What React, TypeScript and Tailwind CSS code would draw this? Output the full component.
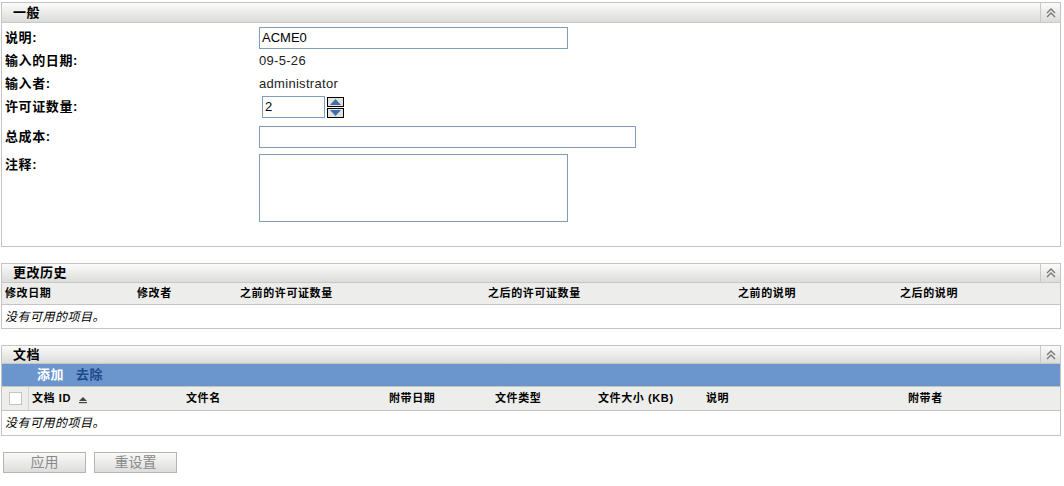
import React from "react";

const CJK = { fontFamily: '"Liberation Sans", "Noto Sans CJK SC", sans-serif' };

function Collapse() {
  return (
    <div className="w-[20px] h-full border-l border-[#c8c8c8] flex items-center justify-center">
      <svg width="10" height="10" viewBox="0 0 10 10">
        <path d="M1 5 L5 1 L9 5" fill="none" stroke="#777" strokeWidth="1.4" />
        <path d="M1 9 L5 5 L9 9" fill="none" stroke="#777" strokeWidth="1.4" />
      </svg>
    </div>
  );
}

function Header({ title, h = "h-[20px]" }: { title: string; h?: string }) {
  return (
    <div className={`${h} flex items-stretch bg-gradient-to-b from-[#fbfbfb] to-[#dcdcd9] border-b border-[#c8c8c8]`}>
      <div className="flex-1 flex items-center pl-[11px] text-[13px] tracking-[0.5px] font-bold text-black">{title}</div>
      <Collapse />
    </div>
  );
}

function Spin() {
  return (
    <div className="flex flex-col gap-[1px] ml-[2px]">
      <div className="w-[17px] h-[10px] border border-black bg-[#e4e2dc] flex items-center justify-center">
        <svg width="11" height="6" viewBox="0 0 11 6"><path d="M0 6 L5.5 0 L11 6 Z" fill="#3a6fb0" /></svg>
      </div>
      <div className="w-[17px] h-[10px] border border-black bg-[#e4e2dc] flex items-center justify-center">
        <svg width="11" height="6" viewBox="0 0 11 6"><path d="M0 0 L5.5 6 L11 0 Z" fill="#3a6fb0" /></svg>
      </div>
    </div>
  );
}

export default function App() {
  const lbl = "w-[254px] shrink-0 text-[13px] tracking-[0.6px] font-bold text-black";
  const val = "text-[13px] tracking-[0.3px] text-[#222]";
  const inputCls = "h-[22px] border border-[#7f9db9] bg-white text-[13px] text-black px-[2px] flex items-center";
  const colHdr = "text-[11px] tracking-[0.6px] font-bold text-black";
  const empty = "text-[12px] tracking-[0.5px] italic text-black";
  return (
    <div className="bg-white w-[1064px] h-[486px] pt-[2px] pl-[1px]" style={CJK}>
      {/* General */}
      <div className="w-[1060px] h-[245px] border border-[#c4c4c4]">
        <Header title="一般" />
        <div className="pl-[3px] pt-[3px]">
          <div className="flex items-center h-[24px]">
            <div className={lbl}>说明:</div>
            <div className={`${inputCls} w-[309px]`}>ACME0</div>
          </div>
          <div className="flex items-center h-[22px]">
            <div className={lbl}>输入的日期:</div>
            <div className={val}>09-5-26</div>
          </div>
          <div className="flex items-center h-[24px]">
            <div className={lbl}>输入者:</div>
            <div className={val}>administrator</div>
          </div>
          <div className="flex items-center h-[22px]">
            <div className={lbl}>许可证数量:</div>
            <div className={`${inputCls} w-[63px] ml-[3px]`}>2</div>
            <Spin />
          </div>
          <div className="flex items-center h-[24px] mt-[7px]">
            <div className={lbl}>总成本:</div>
            <div className={`${inputCls} w-[377px]`}></div>
          </div>
          <div className="flex items-start mt-[5px]">
            <div className={`${lbl} pt-[1px]`}>注释:</div>
            <div className="w-[309px] h-[68px] border border-[#7f9db9] bg-white"></div>
          </div>
        </div>
      </div>

      {/* History */}
      <div className="w-[1060px] mt-[16px] border border-[#c4c4c4]">
        <Header title="更改历史" h="h-[19px]" />
        <div className={`h-[22px] bg-[#ededeb] border-b border-[#c4c4c4] flex items-center pl-[3px] ${colHdr}`}>
          <div className="w-[132px]">修改日期</div>
          <div className="w-[103px]">修改者</div>
          <div className="w-[248px]">之前的许可证数量</div>
          <div className="w-[250px]">之后的许可证数量</div>
          <div className="w-[162px]">之前的说明</div>
          <div>之后的说明</div>
        </div>
        <div className={`h-[23px] flex items-center pl-[3px] ${empty}`}>没有可用的项目。</div>
      </div>

      {/* Documents */}
      <div className="w-[1060px] mt-[16px] border border-[#c4c4c4]">
        <Header title="文档" h="h-[18px]" />
        <div className="h-[22px] bg-[#6a95cd] flex items-center pl-[35px] gap-[12px] text-[13px] tracking-[0.5px] font-bold">
          <span className="text-white">添加</span>
          <span className="text-[#1d4a8a]">去除</span>
        </div>
        <div className={`h-[25px] bg-[#ededeb] border-y border-[#c4c4c4] flex items-stretch ${colHdr}`}>
          <div className="w-[27px] border-r border-[#d4d4d4] flex items-center justify-center">
            <div className="w-[13px] h-[13px] border border-[#c4c4bc] bg-white" />
          </div>
          <div className="w-[157px] pl-[3px] flex items-center">
            文档 ID
            <svg width="8" height="8" viewBox="0 0 8 8" className="ml-[8px] mt-[2px]">
              <path d="M0 5 L4 1 L8 5 Z" fill="#444" />
              <rect x="0" y="6" width="8" height="1.2" fill="#444" />
            </svg>
          </div>
          <div className="w-[203px] flex items-center">文件名</div>
          <div className="w-[106px] flex items-center">附带日期</div>
          <div className="w-[103px] flex items-center">文件类型</div>
          <div className="w-[108px] flex items-center">文件大小 (KB)</div>
          <div className="w-[202px] flex items-center">说明</div>
          <div className="flex items-center">附带者</div>
        </div>
        <div className={`h-[24px] flex items-center pl-[3px] ${empty}`}>没有可用的项目。</div>
      </div>

      <div className="flex gap-[8px] mt-[16px] ml-[2px]">
        <div className="w-[83px] h-[21px] border border-[#b4b4b0] bg-gradient-to-b from-[#fafaf8] to-[#dddddb] flex items-center justify-center text-[14px] text-[#8a8a8a]">应用</div>
        <div className="w-[83px] h-[21px] border border-[#b4b4b0] bg-gradient-to-b from-[#fafaf8] to-[#dddddb] flex items-center justify-center text-[14px] text-[#8a8a8a]">重设置</div>
      </div>
    </div>
  );
}
